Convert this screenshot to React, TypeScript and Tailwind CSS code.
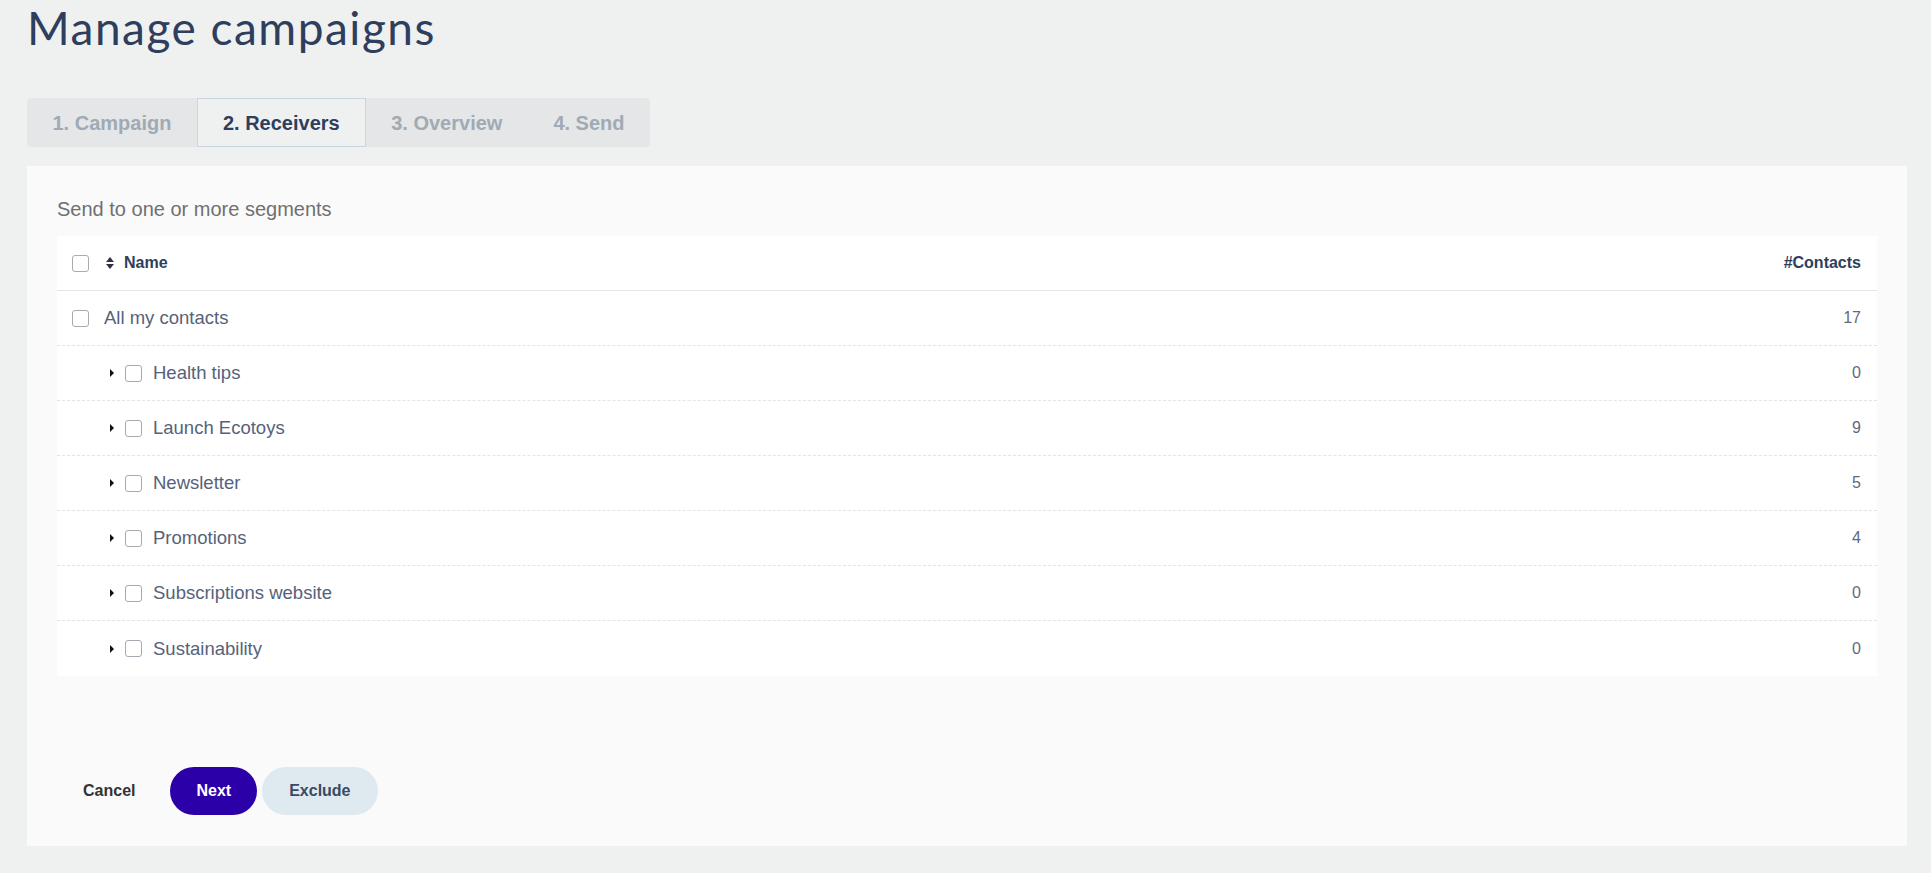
import React from 'react'

const segments = [
  { name: 'Health tips', count: 0 },
  { name: 'Launch Ecotoys', count: 9 },
  { name: 'Newsletter', count: 5 },
  { name: 'Promotions', count: 4 },
  { name: 'Subscriptions website', count: 0 },
  { name: 'Sustainability', count: 0 },
]

const tabs = ['1. Campaign', '2. Receivers', '3. Overview', '4. Send']

function Checkbox() {
  return <span className="block h-[17px] w-[17px] shrink-0 rounded-[3px] border border-[#a6aab1] bg-white" />
}

function SortIcon() {
  return (
    <svg width="8" height="12" viewBox="0 0 8 12" className="shrink-0">
      <polygon points="4,0 8,5 0,5" fill="#2f3440" />
      <polygon points="0,7 8,7 4,12" fill="#2f3440" />
    </svg>
  )
}

function Caret() {
  return (
    <svg width="4" height="8" viewBox="0 0 4 8" className="shrink-0">
      <polygon points="0,0 4,4 0,8" fill="#111" />
    </svg>
  )
}

export default function App() {
  return (
    <div className="min-h-screen bg-[#eff1f1] pb-[27px] pl-[27px] pr-[24px] pt-[1px] font-['Liberation_Sans',Arial,sans-serif]">
      <h1 className="font-['Lato',sans-serif] text-[46px] font-normal leading-[54px] tracking-[1.5px] text-[#2e3e5c]">
        Manage campaigns
      </h1>

      <div className="mt-[43px] flex">
        <div className="flex h-[49px] rounded-[4px] bg-[#e4e6e7]">
          {tabs.map((t, i) =>
            i === 1 ? (
              <div
                key={t}
                className="flex items-center border border-[#c9d5e2] bg-[#eff1f1] px-[25px] text-[20px] font-bold text-[#2e3e5c]"
              >
                {t}
              </div>
            ) : (
              <div key={t} className="flex items-center px-[25.5px] text-[20px] font-bold text-[#a0aab4]">
                {t}
              </div>
            )
          )}
        </div>
      </div>

      <div className="mt-[19px] bg-[#fafafa] px-[30px] pb-[31px] pt-[32px]">
        <p className="text-[20px] leading-[23px] text-[#707070]">Send to one or more segments</p>

        <div className="mt-[15px] bg-white">
          <div className="flex h-[55px] items-center border-b border-[#e3e5e8] pl-[15px] pr-[16px]">
            <Checkbox />
            <span className="ml-[17px]">
              <SortIcon />
            </span>
            <span className="ml-[10px] text-[16px] font-bold text-[#2e3e5c]">Name</span>
            <span className="ml-auto text-[16px] font-bold text-[#2e3e5c]">#Contacts</span>
          </div>

          <div className="flex h-[55px] items-center border-b border-dashed border-[#e4e4e4] pl-[15px] pr-[16px]">
            <Checkbox />
            <span className="ml-[15px] text-[18.5px] text-[#56627a]">All my contacts</span>
            <span className="ml-auto text-[16px] text-[#5e6a7e]">17</span>
          </div>

          {segments.map((s, i) => (
            <div
              key={s.name}
              className={
                i === segments.length - 1
                  ? 'flex h-[55px] items-center pl-[15px] pr-[16px]'
                  : 'flex h-[55px] items-center border-b border-dashed border-[#e4e4e4] pl-[15px] pr-[16px]'
              }
            >
              <span className="ml-[38px]">
                <Caret />
              </span>
              <span className="ml-[11px]">
                <Checkbox />
              </span>
              <span className="ml-[11px] text-[18.5px] text-[#56627a]">{s.name}</span>
              <span className="ml-auto text-[16px] text-[#5e6a7e]">{s.count}</span>
            </div>
          ))}
        </div>

        <div className="mt-[91px] flex items-center">
          <button className="h-[48px] rounded-full px-[26px] text-[16px] font-bold text-[#333]">Cancel</button>
          <button className="ml-[9px] h-[48px] rounded-full bg-[#2c00a9] px-[26px] text-[16px] font-bold text-white">
            Next
          </button>
          <button className="ml-[5px] h-[48px] rounded-full bg-[#dfe9f0] px-[27px] text-[16px] font-bold text-[#3a4a64]">
            Exclude
          </button>
        </div>
      </div>
    </div>
  )
}
